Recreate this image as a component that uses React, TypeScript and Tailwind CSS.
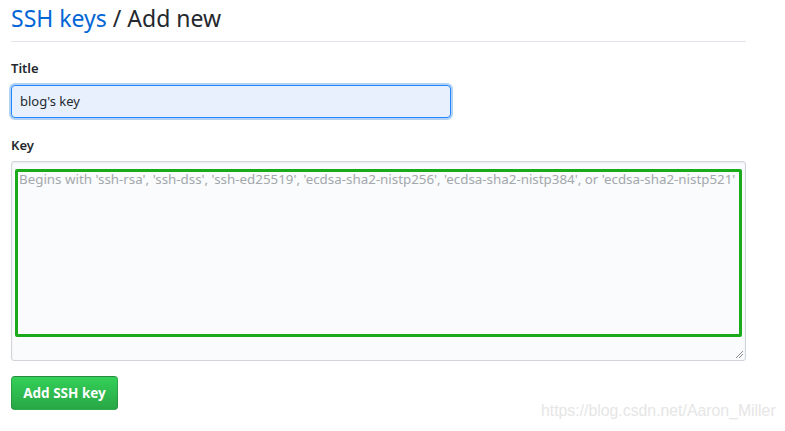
import React from "react";

export default function App() {
  return (
    <div
      className="relative w-[785px] h-[431px] bg-white overflow-hidden"
      style={{ fontFamily: '"Noto Sans", "Open Sans", sans-serif' }}
    >
      <div className="w-[735px] ml-[11px] pt-[3px]">
        <div className="border-b border-[#e1e4e8] pb-[7px]">
          <h1 className="text-[23px] leading-[31px] font-normal text-[#24292e]">
            <span className="text-[#0366d6]">SSH keys</span> / Add new
          </h1>
        </div>
        <div className="mt-[17px]">
          <label className="block text-[13px] leading-[18px] font-semibold text-[#24292e]">Title</label>
          <div className="mt-[8px] w-[440px] h-[33px] rounded-[4px] border border-[#2188ff] bg-[#e8f0fe] shadow-[0_0_0_2px_rgba(3,102,214,0.3)] flex items-center px-[8px] text-[13px] text-[#24292e]">
            blog's key
          </div>
        </div>
        <div className="mt-[18px]">
          <label className="block text-[13px] leading-[18px] font-semibold text-[#24292e]">Key</label>
          <div className="relative mt-[7px] w-[735px] h-[200px] rounded-[3px] border border-[#d1d5da] bg-[#fafbfc] shadow-[inset_0_1px_2px_rgba(27,31,35,0.075)]">
            <div className="absolute left-[3px] top-[7px] w-[727px] h-[168px] border-[3px] border-[#1aab1a] rounded-[2px]" />
            <div className="absolute left-[7px] top-[8px] text-[13.35px] leading-[18px] text-[#a3a8ad] whitespace-nowrap">
              Begins with 'ssh-rsa', 'ssh-dss', 'ssh-ed25519', 'ecdsa-sha2-nistp256', 'ecdsa-sha2-nistp384', or 'ecdsa-sha2-nistp521'
            </div>
            <svg className="absolute right-[1px] bottom-[1px]" width="10" height="10" viewBox="0 0 10 10">
              <line x1="9" y1="2" x2="2" y2="9" stroke="#8a8a8a" strokeWidth="1" />
              <line x1="9" y1="5" x2="5" y2="9" stroke="#8a8a8a" strokeWidth="1" />
            </svg>
          </div>
        </div>
        <button className="mt-[15px] w-[107px] h-[34px] rounded-[4px] border border-[rgba(27,31,35,0.2)] bg-gradient-to-b from-[#34d058] to-[#28a745] text-white text-[13.5px] font-bold">
          Add SSH key
        </button>
      </div>
      <div
        className="absolute left-[541px] top-[401px] text-[17px] leading-[20px] text-[#e6e6e6]"
        style={{ fontFamily: '"Liberation Sans", Arial, sans-serif', transform: "scaleX(0.93)", transformOrigin: "left" }}
      >
        https://blog.csdn.net/Aaron_Miller
      </div>
    </div>
  );
}
